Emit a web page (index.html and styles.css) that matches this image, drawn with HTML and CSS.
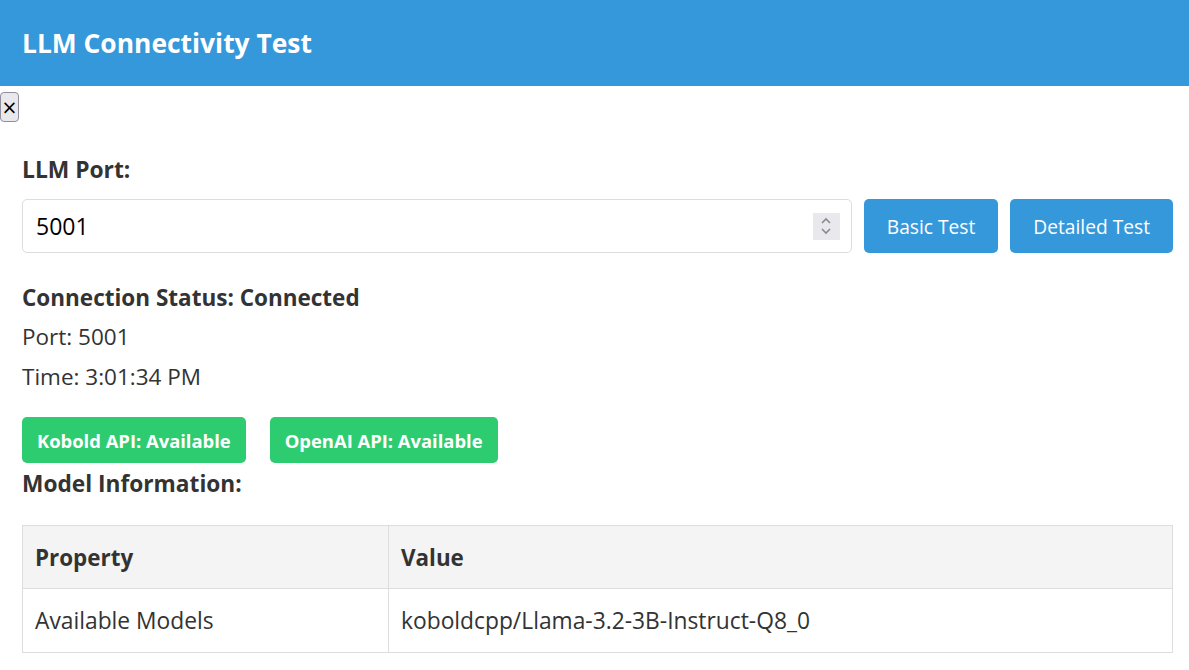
FILE: index.html
```html
<!DOCTYPE html>
<html>
<head>
<meta charset="utf-8">
<link rel="stylesheet" href="styles.css">
</head>
<body>
<header class="topbar"><h1 class="title">LLM Connectivity Test</h1></header>
<button class="close-btn">×</button>
<main class="content">
  <label class="field-label">LLM Port:</label>
  <div class="port-row">
    <div class="port-input">
      <span class="port-value">5001</span>
      <span class="spinner">
        <svg width="14" height="22" viewBox="0 0 14 22"><path d="M3 8 L7 4 L11 8" fill="none" stroke="#8a8a8a" stroke-width="1.6"/><path d="M3 14 L7 18 L11 14" fill="none" stroke="#8a8a8a" stroke-width="1.6"/></svg>
      </span>
    </div>
    <button class="btn">Basic Test</button>
    <button class="btn">Detailed Test</button>
  </div>
  <section class="status">
    <h3 class="status-title">Connection Status: Connected</h3>
    <p class="status-line">Port: 5001</p>
    <p class="status-line">Time: 3:01:34 PM</p>
    <div class="badges">
      <span class="badge">Kobold API: Available</span>
      <span class="badge">OpenAI API: Available</span>
    </div>
    <h3 class="model-title">Model Information:</h3>
    <table class="info-table">
      <thead><tr><th class="col-prop">Property</th><th>Value</th></tr></thead>
      <tbody><tr><td>Available Models</td><td>koboldcpp/Llama-3.2-3B-Instruct-Q8_0</td></tr></tbody>
    </table>
  </section>
</main>
</body>
</html>
```
FILE: styles.css
```css
* { box-sizing: border-box; }
body {
  margin: 0;
  font-family: "Open Sans", "Noto Sans", sans-serif;
  color: #333;
  background: #fff;
  font-size: 22.6px;
}
.topbar {
  background: #3498db;
  height: 86px;
  display: flex;
  align-items: center;
  padding: 0 22px;
}
.title {
  margin: 0;
  color: #fff;
  font-size: 26.4px;
  font-weight: 700;
}
.close-btn {
  display: block;
  margin-top: 6px;
  width: 19px;
  height: 30px;
  padding: 0;
  font-size: 19px;
  line-height: 1;
  font-family: "DejaVu Sans", sans-serif;
  background: #e9e9ed;
  border: 1px solid #8f8f9d;
  border-radius: 4px;
  color: #000;
}
.content {
  padding: 0 16px 0 22px;
}
.field-label {
  display: block;
  font-weight: 700;
  font-size: 22.8px;
  margin-top: 34px;
  line-height: 28px;
}
.port-row {
  display: flex;
  gap: 12px;
  margin-top: 15px;
  height: 54px;
}
.port-input {
  flex: 1;
  border: 1px solid #ddd;
  border-radius: 5px;
  display: flex;
  align-items: center;
  justify-content: space-between;
  padding: 0 11px 0 13px;
}
.port-value {
  font-size: 23px;
  color: #000;
}
.spinner {
  width: 27px;
  height: 27px;
  background: #e9e9ed;
  display: flex;
  align-items: center;
  justify-content: center;
}
.btn {
  background: #3498db;
  color: #fff;
  border: 0;
  border-radius: 5px;
  font-family: inherit;
  font-size: 19.2px;
  padding: 0 23px;
}
.status { margin-top: 30px; }
.status-title {
  margin: 0;
  font-size: 22.5px;
  font-weight: 700;
  line-height: 30px;
}
.status-line {
  margin: 8px 0 0;
  font-size: 22.5px;
  line-height: 32px;
}
.badges {
  display: flex;
  gap: 24px;
  margin-top: 24px;
}
.badge {
  background: #2ecc71;
  color: #fff;
  font-weight: 700;
  font-size: 18.4px;
  border-radius: 5px;
  height: 46px;
  display: flex;
  align-items: center;
  padding: 0 15px;
}
.model-title {
  margin: 3px 0 0;
  font-size: 22.7px;
  font-weight: 700;
  line-height: 36px;
}
.info-table {
  width: 100%;
  border-collapse: collapse;
  margin-top: 23px;
  font-size: 22.8px;
}
.info-table th, .info-table td {
  border: 1px solid #ddd;
  text-align: left;
  padding: 0 12px;
  height: 64px;
}
.info-table th { background: #f4f4f4; font-weight: 700; font-size: 22.4px; height: 63px; }
.col-prop { width: 366px; }
```
